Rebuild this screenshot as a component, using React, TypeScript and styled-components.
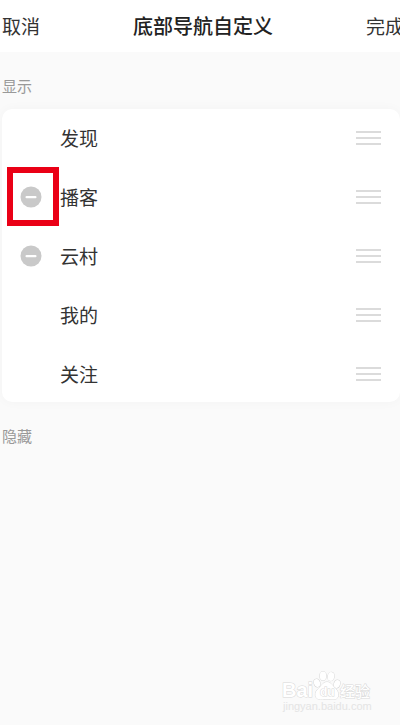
import React from 'react';
import styled, { createGlobalStyle } from 'styled-components';

const GlobalStyle = createGlobalStyle`
  * {
    box-sizing: border-box;
  }
  html {
    background: #fafafa;
  }
  body {
    margin: 0;
    overflow-x: hidden;
    font-family: 'Noto Sans CJK SC', 'Noto Sans', sans-serif;
    color: #333;
  }
`;

const Page = styled.div`
  position: relative;
  display: flex;
  flex-direction: column;
  min-height: 100vh;
  overflow: hidden;
  background: #fafafa;
`;

const Header = styled.header`
  display: flex;
  align-items: center;
  justify-content: space-between;
  height: 52px;
  margin-right: -4px;
  padding-left: 2px;
  background: #fff;
`;

const HeaderButton = styled.button`
  padding: 0;
  border: 0;
  background: none;
  font: inherit;
  font-size: 19px;
  line-height: 28px;
  color: #333;
  cursor: pointer;
`;

const Title = styled.h1`
  margin: 0;
  font-size: 20px;
  font-weight: 500;
  line-height: 28px;
  color: #222;
`;

const SectionTitle = styled.h2`
  margin: 0;
  padding: 23px 2px 12px;
  font-size: 15px;
  font-weight: 400;
  line-height: 22px;
  color: #999;
`;

const Card = styled.ul`
  display: grid;
  gap: 2px;
  margin: 0 0 0 2px;
  padding: 0;
  list-style: none;
  border-radius: 10px;
  background: #fff;
  box-shadow: 0 0 12px rgba(0, 0, 0, 0.03);
`;

const Row = styled.li`
  display: grid;
  grid-template-columns: 58px 1fr auto;
  align-items: center;
  height: 57px;
  padding-right: 19px;
`;

const RemoveSlot = styled.span<{ $marked: boolean }>`
  display: flex;
  align-items: center;
  width: 52px;
  height: 59px;
  margin: -1px 0 -1px 5px;
  padding-left: 7px;
  border: 6px solid ${(p) => (p.$marked ? '#ea0016' : 'transparent')};
`;

const RemoveButton = styled.button`
  display: flex;
  width: 22px;
  height: 22px;
  padding: 0;
  border: 0;
  border-radius: 50%;
  background: none;
  cursor: pointer;
`;

const Name = styled.span`
  font-size: 19px;
  line-height: 28px;
`;

const DragButton = styled.button`
  display: flex;
  padding: 0;
  border: 0;
  background: none;
  cursor: grab;
`;

const Watermark = styled.div`
  position: absolute;
  right: 27px;
  bottom: 9px;
  width: 92px;
`;

const WatermarkSvg = styled.svg`
  display: block;
  overflow: visible;
  fill: #fff;
  stroke: #d8d8d8;
  stroke-width: 1;
  paint-order: stroke;
`;

const MinusIcon = () => (
  <svg width="22" height="22" viewBox="0 0 22 22" aria-hidden="true">
    <circle cx="11" cy="11" r="10.5" fill="#c9c9c9" />
    <rect x="5.5" y="10" width="11" height="2.2" rx="1" fill="#fff" />
  </svg>
);

const GripIcon = () => (
  <svg width="25" height="16" viewBox="0 0 25 16" aria-hidden="true">
    <path d="M0 2H25M0 8H25M0 14H25" stroke="#d0d0d0" strokeWidth="1.6" />
  </svg>
);

const BrandMark = () => (
  <WatermarkSvg width="92" height="46" viewBox="0 0 92 46" aria-label="Baidu 经验">
    <text x="1" y="27" fontFamily="Liberation Sans, sans-serif" fontWeight="700" fontSize="20">
      Bai
    </text>
    <ellipse cx="36" cy="13" rx="3" ry="4" transform="rotate(-20 36 13)" />
    <ellipse cx="42" cy="6" rx="3.2" ry="4.4" />
    <ellipse cx="50" cy="6.5" rx="3.2" ry="4.4" transform="rotate(10 50 6.5)" />
    <ellipse cx="56" cy="14" rx="3" ry="4" transform="rotate(20 56 14)" />
    <path d="M46 12C42 12 40.5 16 37.5 18.5C33 22 33 29.500 39.500 29.500C42.500 29.500 43.500 29 46 29C48.500 29 50 29.500 53 29.500C58.500 29.500 58.500 22 54.500 18.500C51.500 16 50 12 46 12Z" />
    <text x="39" y="26" fontFamily="Liberation Sans, sans-serif" fontWeight="700" fontSize="12">
      du
    </text>
    <text x="59" y="27" fontFamily="Noto Sans CJK SC, sans-serif" fontWeight="500" fontSize="15">
      经验
    </text>
    <text
      x="2"
      y="40"
      fontFamily="Liberation Sans, sans-serif"
      fontSize="11"
      fill="#e4e4e4"
      stroke="none"
    >
      jingyan.baidu.com
    </text>
  </WatermarkSvg>
);

interface NavItem {
  name: string;
  removable?: boolean;
  marked?: boolean;
}

const items: NavItem[] = [
  { name: '发现' },
  { name: '播客', removable: true, marked: true },
  { name: '云村', removable: true },
  { name: '我的' },
  { name: '关注' },
];

export default function App() {
  return (
    <>
      <GlobalStyle />
      <Page>
        <Header>
          <HeaderButton type="button">取消</HeaderButton>
          <Title>底部导航自定义</Title>
          <HeaderButton type="button">完成</HeaderButton>
        </Header>
        <main>
          <SectionTitle>显示</SectionTitle>
          <Card>
            {items.map((item) => (
              <Row key={item.name}>
                <RemoveSlot $marked={Boolean(item.marked)}>
                  {item.removable && (
                    <RemoveButton type="button" aria-label={`隐藏${item.name}`}>
                      <MinusIcon />
                    </RemoveButton>
                  )}
                </RemoveSlot>
                <Name>{item.name}</Name>
                <DragButton type="button" aria-label={`移动${item.name}`}>
                  <GripIcon />
                </DragButton>
              </Row>
            ))}
          </Card>
          <SectionTitle>隐藏</SectionTitle>
        </main>
        <Watermark>
          <BrandMark />
        </Watermark>
      </Page>
    </>
  );
}
